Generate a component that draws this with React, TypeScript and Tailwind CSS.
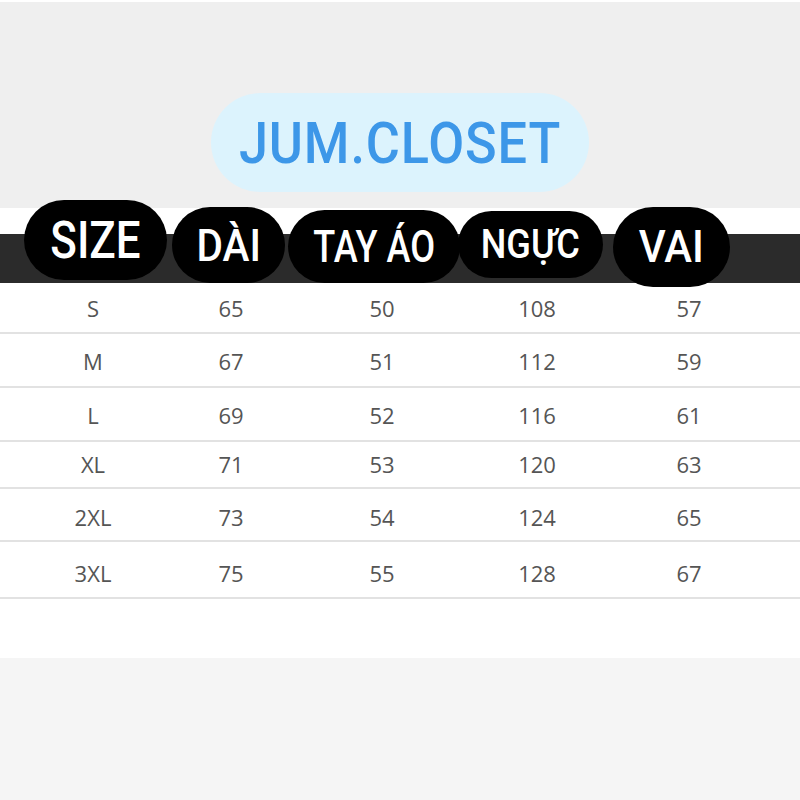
import React from "react";

const rows: { size: string; vals: string[]; cls: string }[] = [
  { size: "S", vals: ["65", "50", "108", "57"], cls: "h-[51px] pt-[2px]" },
  { size: "M", vals: ["67", "51", "112", "59"], cls: "h-[54px] pt-[2px]" },
  { size: "L", vals: ["69", "52", "116", "61"], cls: "h-[54px] pt-[2px]" },
  { size: "XL", vals: ["71", "53", "120", "63"], cls: "h-[47px]" },
  { size: "2XL", vals: ["73", "54", "124", "65"], cls: "h-[53px] pt-[6px]" },
  { size: "3XL", vals: ["75", "55", "128", "67"], cls: "h-[57px] pt-[8px]" },
];

function Cell({ text }: { text: string }) {
  return (
    <div className="flex items-center justify-center">
      <span>{text}</span>
    </div>
  );
}

export default function App() {
  return (
    <div className="w-[800px] h-[800px] bg-white overflow-hidden" style={{ fontFamily: "'Open Sans', 'Noto Sans', sans-serif" }}>
      <div className="h-[2px] bg-white" />
      <div className="h-[206px] bg-[#efefef] flex justify-center pt-[91px]">
        <div className="w-[378px] h-[99px] rounded-full bg-[#dcf3fd] flex items-center justify-center">
          <span
            className="text-[58px] leading-none text-[#3d97e8] font-medium inline-block scale-x-[0.9] tracking-[1px]"
            style={{ fontFamily: "Roboto, sans-serif" }}
          >
            JUM.CLOSET
          </span>
        </div>
      </div>
      <div className="h-[450px] bg-white relative">
        <div className="pt-[26px]">
          <div className="h-[49px] bg-[#2b2b2b]" />
        </div>
        <div
          className="absolute left-0 top-[-8px] flex items-start text-white font-medium"
          style={{ fontFamily: "Roboto, sans-serif" }}
        >
          <div className="ml-[24px] w-[143px] h-[80px] rounded-[40px] bg-black flex items-center justify-center">
            <span className="text-[51px] leading-none inline-block scale-x-[0.86]">SIZE</span>
          </div>
          <div className="ml-[5px] mt-[7px] w-[113px] h-[76px] rounded-[38px] bg-black flex items-center justify-center">
            <span className="text-[45px] leading-none inline-block scale-x-[0.9]">DÀI</span>
          </div>
          <div className="ml-[3px] mt-[10px] w-[172px] h-[73px] rounded-[37px] bg-black flex items-center justify-center">
            <span className="text-[44px] leading-none inline-block scale-x-[0.82] whitespace-nowrap">TAY ÁO</span>
          </div>
          <div className="ml-[-2px] mt-[11px] w-[145px] h-[67px] rounded-[34px] bg-black flex items-center justify-center">
            <span className="text-[41px] leading-none inline-block scale-x-[0.88]">NGỰC</span>
          </div>
          <div className="ml-[10px] mt-[7px] w-[117px] h-[80px] rounded-[40px] bg-black flex items-center justify-center">
            <span className="text-[44px] leading-none inline-block scale-x-[0.95]">VAI</span>
          </div>
        </div>
        <div className="text-[22px] text-[#555555]">
          {rows.map((r) => (
            <div
              key={r.size}
              className={`grid grid-cols-[186px_90px_212px_98px_206px] border-b-2 border-[#e2e2e2] ${r.cls}`}
            >
              <Cell text={r.size} />
              {r.vals.map((v, i) => (
                <Cell key={i} text={v} />
              ))}
            </div>
          ))}
        </div>
      </div>
      <div className="h-[142px] bg-[#f5f5f5]" />
    </div>
  );
}
